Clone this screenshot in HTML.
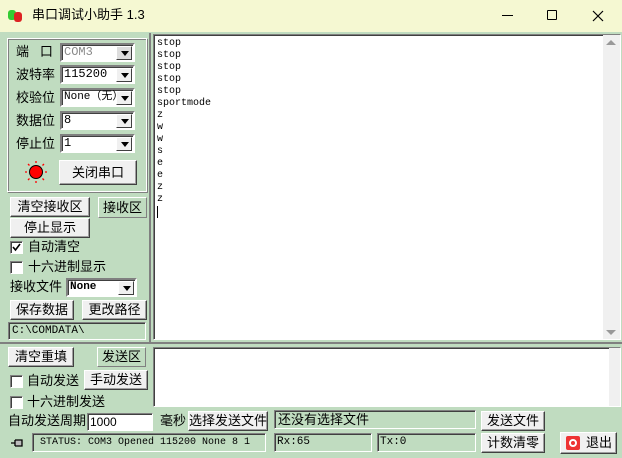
<!DOCTYPE html>
<html><head><meta charset="utf-8"><style>
*{box-sizing:border-box;margin:0;padding:0}
body{width:622px;height:458px;overflow:hidden;background:#c0dcc0;font-family:"Liberation Sans","Noto Sans CJK SC",sans-serif;font-size:13px;color:#000;position:relative}
.a{position:absolute}
.t{position:absolute;white-space:nowrap;line-height:16px}
.btn{position:absolute;background:#f0f0f0;border:1px solid;border-color:#fff #404040 #404040 #fff;box-shadow:inset -1px -1px 0 #a0a0a0;text-align:center;white-space:nowrap;font-size:13px}
.sel{position:absolute;background:#fff;border:2px solid;border-color:#808080 #fff #fff #808080;box-shadow:inset 1px 1px 0 #404040;font-family:"Liberation Mono",monospace;font-size:12px;padding-left:2px;line-height:14px;white-space:nowrap;overflow:hidden}
.sel .ar{position:absolute;right:1px;top:1px;width:16px;height:14px;background:#f0f0f0;border:1px solid;border-color:#fff #404040 #404040 #fff}
.sel .ar:after{content:"";position:absolute;left:4px;top:4px;border:4px solid transparent;border-top:5px solid #000;border-bottom:0}
.sunk{position:absolute;border:1px solid;border-color:#808080 #fff #fff #808080;box-shadow:inset 1px 1px 0 #404040;white-space:nowrap;overflow:hidden}
.cb{position:absolute;width:13px;height:13px;background:#fff;border:1px solid;border-color:#808080 #fff #fff #808080;box-shadow:inset 1px 1px 0 #404040}
.mono{font-family:"Liberation Mono",monospace;font-size:11px}
</style></head><body>
<div class="a" style="left:0;top:0;width:622px;height:32px;background:#f5f8d2"></div>
<div class="a" style="left:8px;top:10px;width:8px;height:10px;background:#3c3;border-radius:3px"></div>
<div class="a" style="left:14px;top:12px;width:8px;height:10px;background:#d22;border-radius:3px"></div>
<div class="t" style="left:32px;top:7px;font-size:13px">串口调试小助手 1.3</div>
<div class="a" style="left:502px;top:15px;width:11px;height:1px;background:#000"></div>
<div class="a" style="left:547px;top:10px;width:10px;height:10px;border:1px solid #000;border-radius:1px"></div>
<svg class="a" style="left:592px;top:10px" width="12" height="12"><path d="M1 1L11 11M11 1L1 11" stroke="#000" stroke-width="1.2"/></svg>

<div class="a" style="left:3px;top:33px;width:148px;height:310px;border-right:2px solid #808080"></div>
<div class="a" style="left:7px;top:38px;width:140px;height:154px;border:1px solid #fff;box-shadow:inset 1px 1px 0 #808080,1px 1px 0 #808080"></div>
<div class="t" style="left:16px;top:44px">端&nbsp;&nbsp;&nbsp;口</div>
<div class="sel" style="left:60px;top:43px;width:75px;height:19px;color:#888">COM3<div class="ar" style="background:#ddd"></div></div>
<div class="t" style="left:16px;top:67px">波特率</div>
<div class="sel" style="left:60px;top:65px;width:75px;height:19px">115200<div class="ar"></div></div>
<div class="t" style="left:16px;top:90px">校验位</div>
<div class="sel" style="left:60px;top:88px;width:75px;height:19px;font-size:11px">None（无）<div class="ar"></div></div>
<div class="t" style="left:16px;top:113px">数据位</div>
<div class="sel" style="left:60px;top:111px;width:75px;height:19px">8<div class="ar"></div></div>
<div class="t" style="left:16px;top:136px">停止位</div>
<div class="sel" style="left:60px;top:134px;width:75px;height:19px">1<div class="ar"></div></div>
<svg class="a" style="left:24px;top:160px" width="24" height="24"><circle cx="12" cy="12" r="6.5" fill="#f00" stroke="#000" stroke-width="1"/><g stroke="#f00" stroke-width="1.3"><path d="M12 1v2M12 21v2M1 12h2M21 12h2M4 4l1.5 1.5M20 4l-1.5 1.5M4 20l1.5-1.5M20 20l-1.5-1.5"/></g></svg>
<div class="btn" style="left:59px;top:160px;width:78px;height:25px;line-height:23px">关闭串口</div>

<div class="btn" style="left:10px;top:197px;width:80px;height:20px;line-height:18px">清空接收区</div>
<div class="sunk" style="left:98px;top:197px;width:49px;height:21px;line-height:19px;text-align:center;border-color:#fff #808080 #808080 #fff;box-shadow:none">接收区</div>
<div class="btn" style="left:10px;top:218px;width:80px;height:20px;line-height:18px">停止显示</div>
<div class="cb" style="left:10px;top:241px"></div>
<svg class="a" style="left:12px;top:243px" width="9" height="9"><path d="M1 4l2.5 3L8 1" stroke="#000" stroke-width="1.6" fill="none"/></svg>
<div class="t" style="left:28px;top:239px">自动清空</div>
<div class="cb" style="left:10px;top:261px"></div>
<div class="t" style="left:28px;top:259px">十六进制显示</div>
<div class="t" style="left:10px;top:279px">接收文件</div>
<div class="sel" style="left:66px;top:278px;width:71px;height:19px;font-size:11px;font-weight:bold">None<div class="ar"></div></div>
<div class="btn" style="left:10px;top:300px;width:64px;height:20px;line-height:18px">保存数据</div>
<div class="btn" style="left:82px;top:300px;width:65px;height:20px;line-height:18px">更改路径</div>
<div class="sunk mono" style="left:8px;top:322px;width:138px;height:18px;line-height:16px;padding-left:3px">C:\COMDATA\</div>

<div class="a" style="left:153px;top:34px;width:468px;height:306px;background:#fff;border:1px solid;border-color:#808080 #fff #fff #808080;box-shadow:inset 1px 1px 0 #404040"></div>
<div class="a mono" style="left:157px;top:38px;line-height:12px;font-size:10px">stop<br>stop<br>stop<br>stop<br>stop<br>sportmode<br>z<br>w<br>w<br>s<br>e<br>e<br>z<br>z</div>
<div class="a" style="left:157px;top:206px;width:1px;height:12px;background:#000"></div>
<div class="a" style="left:603px;top:35px;width:17px;height:304px;background:#f0f0f0"></div>
<div class="a" style="left:606px;top:40px;border:5px solid transparent;border-bottom:5px solid #999;border-top:0"></div>
<div class="a" style="left:606px;top:330px;border:5px solid transparent;border-top:5px solid #999;border-bottom:0"></div>
<div class="a" style="left:0;top:342px;width:622px;height:2px;background:#808080"></div>

<div class="btn" style="left:8px;top:347px;width:66px;height:20px;line-height:18px">清空重填</div>
<div class="sunk" style="left:97px;top:347px;width:49px;height:20px;line-height:18px;text-align:center;border-color:#fff #808080 #808080 #fff;box-shadow:none">发送区</div>
<div class="cb" style="left:10px;top:375px"></div>
<div class="t" style="left:27px;top:373px">自动发送</div>
<div class="btn" style="left:84px;top:370px;width:64px;height:20px;line-height:18px">手动发送</div>
<div class="cb" style="left:10px;top:396px"></div>
<div class="t" style="left:27px;top:394px">十六进制发送</div>
<div class="a" style="left:153px;top:347px;width:468px;height:60px;background:#fff;border:1px solid;border-color:#808080 #fff #fff #808080;box-shadow:inset 1px 1px 0 #404040"></div>
<div class="a" style="left:609px;top:348px;width:11px;height:58px;background:#f0f0f0"></div>

<div class="t" style="left:8px;top:413px">自动发送周期</div>
<div class="sunk" style="left:87px;top:413px;width:66px;height:18px;background:#fff;line-height:16px;padding-left:2px;font-size:12px">1000</div>
<div class="t" style="left:160px;top:413px">毫秒</div>
<div class="btn" style="left:188px;top:411px;width:80px;height:20px;line-height:18px">选择发送文件</div>
<div class="sunk" style="left:274px;top:410px;width:202px;height:19px;line-height:17px;padding-left:3px">还没有选择文件</div>
<div class="btn" style="left:481px;top:411px;width:64px;height:20px;line-height:18px">发送文件</div>

<svg class="a" style="left:10px;top:437px" width="14" height="12"><path d="M1 6h4M5 3v6M5 3h7v6H5" stroke="#000" stroke-width="1.3" fill="#bbb"/></svg>
<div class="sunk mono" style="left:32px;top:433px;width:234px;height:19px;line-height:17px;padding-left:7px;font-size:10px">STATUS: COM3 Opened 115200 None  8 1</div>
<div class="sunk mono" style="left:274px;top:433px;width:98px;height:19px;line-height:17px;padding-left:2px">Rx:65</div>
<div class="sunk mono" style="left:377px;top:433px;width:99px;height:19px;line-height:17px;padding-left:2px">Tx:0</div>
<div class="btn" style="left:481px;top:433px;width:64px;height:20px;line-height:18px">计数清零</div>
<div class="btn" style="left:560px;top:432px;width:57px;height:22px;line-height:20px;text-align:right;padding-right:4px">退出</div>
<div class="a" style="left:566px;top:436px;width:14px;height:14px;background:#e33;border-radius:2px"></div>
<div class="a" style="left:569px;top:439px;width:8px;height:8px;border:2px solid #fff;border-radius:50%"></div>
</body></html>
